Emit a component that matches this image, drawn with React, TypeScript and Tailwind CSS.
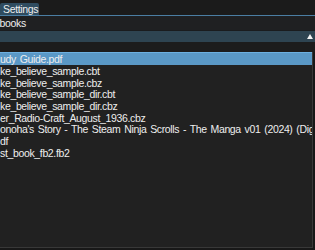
import * as React from 'react';

// ============================================================================
// Data
// ============================================================================

const files = [
  'udy Guide.pdf',
  'ke_believe_sample.cbt',
  'ke_believe_sample.cbz',
  'ke_believe_sample_dir.cbt',
  'ke_believe_sample_dir.cbz',
  'er_Radio-Craft_August_1936.cbz',
  "onoha's Story - The Steam Ninja Scrolls - The Manga v01 (2024) (Digital)",
  'df',
  'st_book_fb2.fb2',
];

// ============================================================================
// Main Component
// ============================================================================

export default function App() {
  return (
    <div
      className="w-[315px] h-[250px] overflow-hidden bg-[#181818] text-[#eeeeee] text-[10.5px] leading-[12px] tracking-[-0.35px] [word-spacing:1.2px] flex flex-col"
      style={{ fontFamily: '"Liberation Sans", Arial, sans-serif' }}
    >
      {/* tab bar */}
      <div className="h-[15px] bg-[#1b1b1b] flex items-end">
        <div className="h-[12px] w-[39px] px-[3px] bg-[#2f4c60] flex items-center rounded-t-[2px]">
          Settings
        </div>
      </div>
      <div className="h-[1px] bg-[#4b7ea3]" />

      {/* path */}
      <div className="h-[14px] bg-[#1f2022] flex items-center whitespace-nowrap">
        <span className="-ml-[3px]">/books</span>
      </div>

      {/* combo header */}
      <div className="h-[12px] bg-[#2e4451] flex items-center justify-end pr-[2px] border-t border-[#1a1c1e]">
        <svg width="6" height="5" viewBox="0 0 6 5">
          <path d="M3 0 L6 5 L0 5 Z" fill="#f2f2f2" />
        </svg>
      </div>

      <div className="h-[10px] bg-[#1c1c1c]" />

      {/* file list */}
      <div className="flex-1 bg-[#212121] border-r border-b border-[#383838] mr-[2px] mb-[2px] overflow-hidden">
        <ul className="flex flex-col">
          {files.map((name, index) => (
            <li
              key={index}
              className={
                index === 0
                  ? 'h-[13px] bg-[#5a98c6] border-t border-[#6db0e0] flex items-center whitespace-nowrap'
                  : 'h-[11.7px] flex items-center whitespace-nowrap'
              }
            >
              {name}
            </li>
          ))}
        </ul>
      </div>
    </div>
  );
}
